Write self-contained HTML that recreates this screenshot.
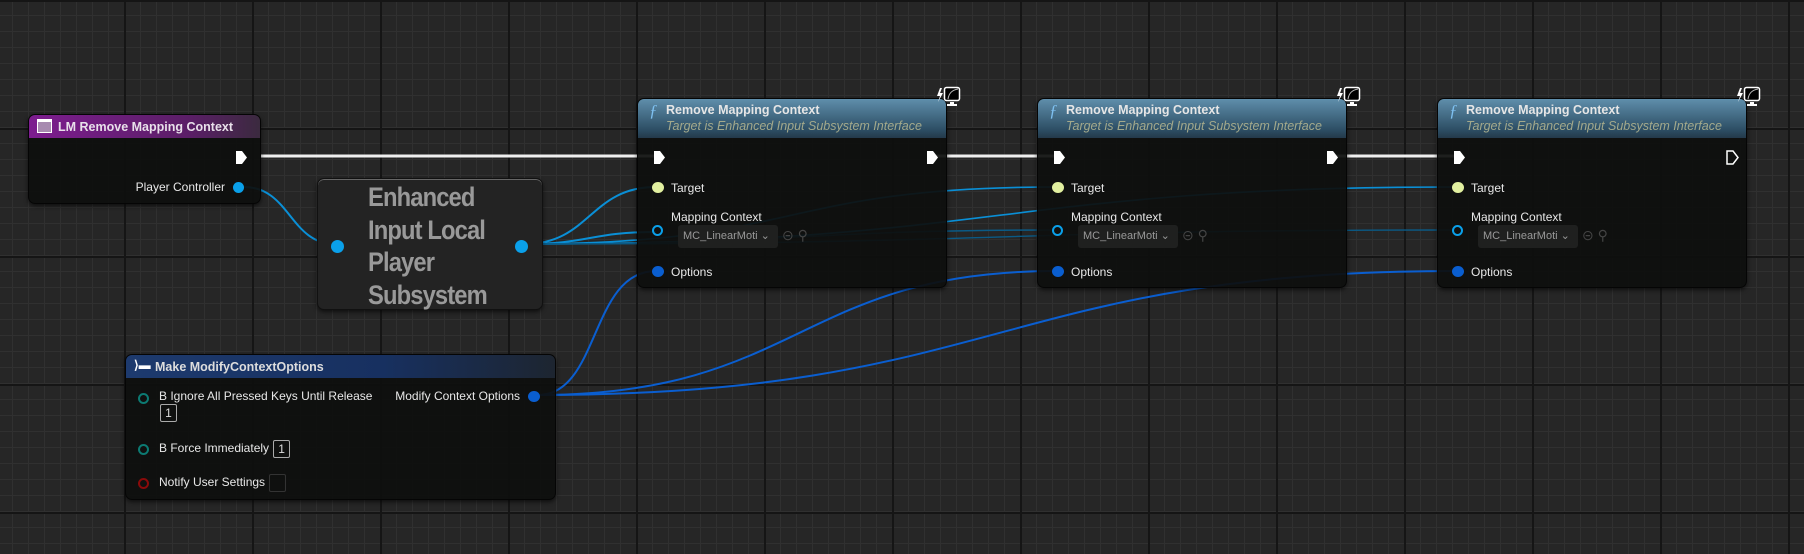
<!DOCTYPE html>
<html><head><meta charset="utf-8"><style>
*{margin:0;padding:0;box-sizing:border-box}
body{width:1804px;height:554px;overflow:hidden;position:relative;font-family:"Liberation Sans",sans-serif;
background-color:#262626;
background-image:
linear-gradient(90deg,transparent 124px,#151515 124px,#151515 126px,transparent 126px),
linear-gradient(180deg,#151515 0,#151515 2px,transparent 2px),
linear-gradient(90deg,transparent 12px,#303030 12px,#303030 13px,transparent 13px),
linear-gradient(180deg,transparent 15px,#303030 15px,#303030 16px,transparent 16px);
background-size:128px 554px,1804px 128px,16px 16px,16px 16px;}
.node{position:absolute;background:rgba(14,15,14,.93);border:1px solid #050505;border-radius:7px;box-shadow:0 2px 4px rgba(0,0,0,.6);color:#e8e8e8;font-size:12px}
.hdr{position:absolute;left:0;right:0;top:0;border-radius:6px 6px 0 0}
.t{position:absolute;white-space:nowrap}
.b{font-weight:bold}
.pin{position:absolute;width:11px;height:11px;border-radius:50%}
.exec{position:absolute;width:13px;height:15px}
svg{position:absolute;left:0;top:0}
.dd{position:absolute;background:#1f201f;border-radius:3px;color:#999;font-size:11px;padding:4px 5px;white-space:nowrap}
.cb{display:inline-block;vertical-align:middle;width:17px;height:18px;border:1px solid #aaa;border-radius:2px;font-size:12px;text-align:center;line-height:16px;color:#ddd;margin-left:4px}
</style></head><body>

<svg width="1804" height="554" style="z-index:1">
<g fill="none">
<path d="M261 156 L656 156 M930 156 L1056 156 M1330 156 L1456 156" stroke="#f0f0f0" stroke-width="3"/>
<path d="M244 187 C290 187 290 244 335 244" stroke="#0a8fd6" stroke-width="2"/>
<path d="M525 244 C590 244 590 187 656 187" stroke="#0a8fd6" stroke-width="2"/>
<path d="M525 244 C590 244 590 232 656 232" stroke="#0a8fd6" stroke-width="2"/>
<path d="M525 244 C800 244 780 187 1056 187" stroke="#0a8fd6" stroke-width="1.6"/>
<path d="M525 244 C1000 244 1000 187 1456 187" stroke="#0a8fd6" stroke-width="1.6"/>
<path d="M525 244 C800 244 800 230 1056 230" stroke="#0a5a86" stroke-width="1.4"/>
<path d="M525 244 C1000 244 1000 230 1456 230" stroke="#0a5a86" stroke-width="1.4"/>
<path d="M538 395 C600 395 590 271 656 271" stroke="#0a5ed0" stroke-width="2"/>
<path d="M538 395 C800 395 800 271 1056 271" stroke="#0a5ed0" stroke-width="2"/>
<path d="M538 395 C1000 395 1000 271 1456 271" stroke="#0a5ed0" stroke-width="2"/>
</g></svg>

<!-- LM node -->
<div class="node" style="left:28px;top:114px;width:233px;height:90px;z-index:2">
<div class="hdr" style="height:23px;background:linear-gradient(90deg,#7d1d8f,#5a1e66 70%,#3b2a3f)"></div>
<div style="position:absolute;left:8px;top:4px;width:15px;height:14px;border:1px solid #fff;background:#a78ab0;border-top-width:3px"></div>
<div class="t b" style="left:29px;top:5px;color:#e8e0ea;font-size:12.5px">LM Remove Mapping Context</div>
<svg class="exec" style="left:206px;top:35px;position:absolute" width="13" height="15"><path d="M1 1H7L12 7.5L7 14H1Z" fill="#fff"/></svg>
<div class="t" style="right:35px;top:65px">Player Controller</div>
<div class="pin" style="left:204px;top:67px;background:#0aa0ea"></div>
</div>

<!-- Enhanced node -->
<div class="node" style="left:317px;top:178px;width:226px;height:132px;background:#232323;border-color:#111;box-shadow:inset 0 1px 0 #666,0 2px 4px rgba(0,0,0,.6);z-index:2">
<div class="t b" style="left:50px;top:2px;font-size:27px;line-height:32.5px;color:#999;white-space:normal;width:165px;letter-spacing:-1px;transform:scaleX(.88);transform-origin:left">Enhanced Input Local Player Subsystem</div>
<div class="pin" style="left:13px;top:61px;width:13px;height:13px;background:#0aa0ea"></div>
<div class="pin" style="left:197px;top:61px;width:13px;height:13px;background:#0aa0ea"></div>
</div>

<div id="tpl"></div>
<script>
var h='';
[637,1037,1437].forEach(function(x,i){
h+='<div class="node" style="left:'+x+'px;top:98px;width:310px;height:190px;z-index:2">'+
'<div class="hdr" style="height:39px;background:linear-gradient(180deg,#5f8eab,#2c4d63 80%,#24394a)"></div>'+
'<div class="t" style="left:11px;top:2px;color:#7ec0f0;font-style:italic;font-family:\'Liberation Serif\',serif;font-size:17px">&#402;</div>'+
'<div class="t b" style="left:28px;top:4px;color:#e6e6e6;font-size:12.5px">Remove Mapping Context</div>'+
'<div class="t" style="left:28px;top:20px;color:#a3a98c;font-style:italic;font-size:12.5px">Target is Enhanced Input Subsystem Interface</div>'+
'<svg class="exec" style="position:absolute;left:15px;top:51px" width="13" height="15"><path d="M1 1H7L12 7.5L7 14H1Z" fill="#fff"/></svg>'+
'<svg class="exec" style="position:absolute;left:288px;top:51px" width="13" height="15"><path d="M1 1H7L12 7.5L7 14H1Z" '+(i==2?'fill="none" stroke="#fff" stroke-width="1.5"':'fill="#fff"')+'/></svg>'+
'<div class="pin" style="left:14px;top:83px;width:12px;background:#e2f0a0"></div>'+
'<div class="t" style="left:33px;top:82px">Target</div>'+
'<div class="t" style="left:33px;top:111px">Mapping Context</div>'+
'<div class="pin" style="left:14px;top:126px;border:2px solid #0aa0ea"></div>'+
'<div class="dd" style="left:40px;top:126px;width:100px;height:23px">MC_LinearMoti &#8964;</div>'+
'<div class="t" style="left:144px;top:128px;color:#444;font-size:14px">&#8861; &#9906;</div>'+
'<div class="pin" style="left:14px;top:167px;width:12px;background:#0a5ed0"></div>'+
'<div class="t" style="left:33px;top:166px">Options</div>'+
'</div>'+
'<svg style="position:absolute;left:'+(x+300)+'px;top:86px;z-index:3" width="24" height="24"><path d="M3 2L0 10H3L1 16L6 7H3L5 2Z" fill="#fff"/><rect x="7.5" y="1.5" width="15" height="13" rx="2" fill="#000" stroke="#fff" stroke-width="1.5"/><path d="M11 13C12 7 15 4 21 3" stroke="#bbb" fill="none"/><rect x="13" y="16" width="4" height="2" fill="#fff"/><rect x="10" y="18" width="10" height="2" fill="#fff"/></svg>';
});
document.getElementById('tpl').innerHTML=h;
</script>

<!-- Make node -->
<div class="node" style="left:125px;top:354px;width:431px;height:146px;z-index:2">
<div class="hdr" style="height:23px;background:linear-gradient(90deg,#1d3a6e,#173060 60%,#1d2530)"></div>
<div class="t b" style="left:8px;top:3px;color:#fff;font-size:12px">&#10217;&#9644;</div>
<div class="t b" style="left:29px;top:5px;color:#ddd;font-size:12.5px">Make ModifyContextOptions</div>
<div class="pin" style="left:12px;top:38px;border:2px solid #0c7a72"></div>
<div class="t" style="left:33px;top:34px">B Ignore All Pressed Keys Until Release</div>
<div class="t" style="left:34px;top:49px"><span class="cb" style="margin:0">1</span></div>
<div class="pin" style="left:12px;top:89px;border:2px solid #0c7a72"></div>
<div class="t" style="left:33px;top:85px">B Force Immediately<span class="cb">1</span></div>
<div class="pin" style="left:12px;top:123px;border:2px solid #8a0a0a"></div>
<div class="t" style="left:33px;top:119px">Notify User Settings<span class="cb" style="border-color:#333"></span></div>
<div class="t" style="right:35px;top:34px">Modify Context Options</div>
<div class="pin" style="left:402px;top:36px;width:12px;background:#0a5ed0"></div>
</div>
</body></html>
